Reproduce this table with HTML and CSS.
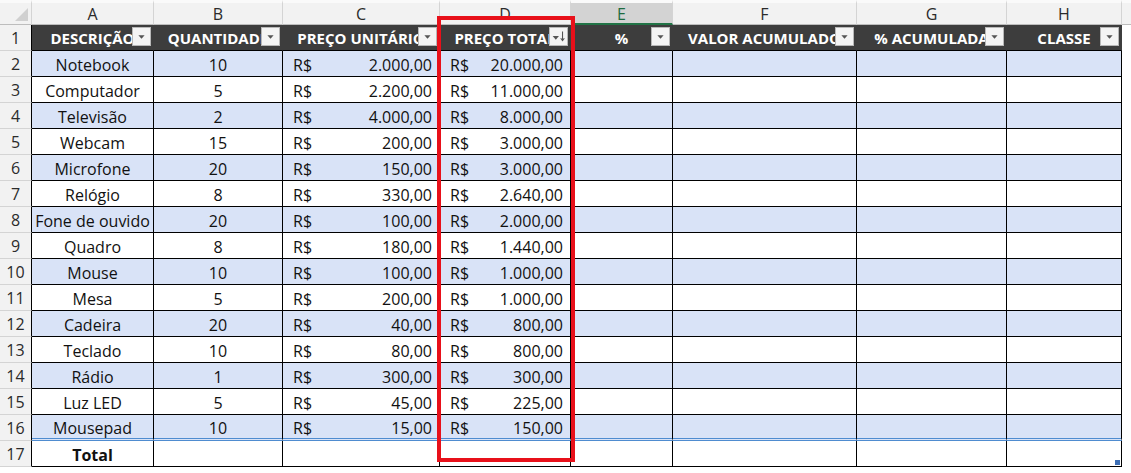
FILE: index.html
```html
<!DOCTYPE html>
<html lang="pt">
<head>
<meta charset="utf-8">
<title>Planilha</title>
<link rel="stylesheet" href="styles.css">
</head>
<body>
<div class="sheet">
  <div class="corner"><span class="corner-tri"></span></div>
  <div class="colhead">A</div>
  <div class="colhead">B</div>
  <div class="colhead">C</div>
  <div class="colhead">D</div>
  <div class="colhead sel">E</div>
  <div class="colhead">F</div>
  <div class="colhead">G</div>
  <div class="colhead">H</div>
  <div class="colhead filler"></div>

  <div class="rownum">1</div>
  <div class="th"><span>DESCRIÇÃO</span><i class="fbtn"><svg viewBox="0 0 19 19"><path d="M6 8h7l-3.5 4z"/></svg></i></div>
  <div class="th"><span>QUANTIDADE</span><i class="fbtn"><svg viewBox="0 0 19 19"><path d="M6 8h7l-3.5 4z"/></svg></i></div>
  <div class="th"><span>PREÇO UNITÁRIO</span><i class="fbtn"><svg viewBox="0 0 19 19"><path d="M6 8h7l-3.5 4z"/></svg></i></div>
  <div class="th"><span>PREÇO TOTAL</span><i class="fbtn"><svg viewBox="0 0 19 19"><path d="M3 9h7l-3.5 4z"/><path d="M14 4v10M12 11.5l2 2.5 2-2.5" fill="none" stroke="#555" stroke-width="1.2"/></svg></i></div>
  <div class="th"><span>%</span><i class="fbtn"><svg viewBox="0 0 19 19"><path d="M6 8h7l-3.5 4z"/></svg></i></div>
  <div class="th"><span>VALOR ACUMULADO</span><i class="fbtn"><svg viewBox="0 0 19 19"><path d="M6 8h7l-3.5 4z"/></svg></i></div>
  <div class="th"><span>% ACUMULADA</span><i class="fbtn"><svg viewBox="0 0 19 19"><path d="M6 8h7l-3.5 4z"/></svg></i></div>
  <div class="th"><span>CLASSE</span><i class="fbtn"><svg viewBox="0 0 19 19"><path d="M6 8h7l-3.5 4z"/></svg></i></div>
  <div class="blank"></div>

  <div class="rownum">2</div><div class="c ctr band">Notebook</div><div class="c ctr band">10</div><div class="c acc band"><span>R$</span><span>2.000,00</span></div><div class="c acc band"><span>R$</span><span>20.000,00</span></div><div class="c band"></div><div class="c band"></div><div class="c band"></div><div class="c band"></div><div class="blank"></div>
  <div class="rownum">3</div><div class="c ctr">Computador</div><div class="c ctr">5</div><div class="c acc"><span>R$</span><span>2.200,00</span></div><div class="c acc"><span>R$</span><span>11.000,00</span></div><div class="c"></div><div class="c"></div><div class="c"></div><div class="c"></div><div class="blank"></div>
  <div class="rownum">4</div><div class="c ctr band">Televisão</div><div class="c ctr band">2</div><div class="c acc band"><span>R$</span><span>4.000,00</span></div><div class="c acc band"><span>R$</span><span>8.000,00</span></div><div class="c band"></div><div class="c band"></div><div class="c band"></div><div class="c band"></div><div class="blank"></div>
  <div class="rownum">5</div><div class="c ctr">Webcam</div><div class="c ctr">15</div><div class="c acc"><span>R$</span><span>200,00</span></div><div class="c acc"><span>R$</span><span>3.000,00</span></div><div class="c"></div><div class="c"></div><div class="c"></div><div class="c"></div><div class="blank"></div>
  <div class="rownum">6</div><div class="c ctr band">Microfone</div><div class="c ctr band">20</div><div class="c acc band"><span>R$</span><span>150,00</span></div><div class="c acc band"><span>R$</span><span>3.000,00</span></div><div class="c band"></div><div class="c band"></div><div class="c band"></div><div class="c band"></div><div class="blank"></div>
  <div class="rownum">7</div><div class="c ctr">Relógio</div><div class="c ctr">8</div><div class="c acc"><span>R$</span><span>330,00</span></div><div class="c acc"><span>R$</span><span>2.640,00</span></div><div class="c"></div><div class="c"></div><div class="c"></div><div class="c"></div><div class="blank"></div>
  <div class="rownum">8</div><div class="c ctr band">Fone de ouvido</div><div class="c ctr band">20</div><div class="c acc band"><span>R$</span><span>100,00</span></div><div class="c acc band"><span>R$</span><span>2.000,00</span></div><div class="c band"></div><div class="c band"></div><div class="c band"></div><div class="c band"></div><div class="blank"></div>
  <div class="rownum">9</div><div class="c ctr">Quadro</div><div class="c ctr">8</div><div class="c acc"><span>R$</span><span>180,00</span></div><div class="c acc"><span>R$</span><span>1.440,00</span></div><div class="c"></div><div class="c"></div><div class="c"></div><div class="c"></div><div class="blank"></div>
  <div class="rownum">10</div><div class="c ctr band">Mouse</div><div class="c ctr band">10</div><div class="c acc band"><span>R$</span><span>100,00</span></div><div class="c acc band"><span>R$</span><span>1.000,00</span></div><div class="c band"></div><div class="c band"></div><div class="c band"></div><div class="c band"></div><div class="blank"></div>
  <div class="rownum">11</div><div class="c ctr">Mesa</div><div class="c ctr">5</div><div class="c acc"><span>R$</span><span>200,00</span></div><div class="c acc"><span>R$</span><span>1.000,00</span></div><div class="c"></div><div class="c"></div><div class="c"></div><div class="c"></div><div class="blank"></div>
  <div class="rownum">12</div><div class="c ctr band">Cadeira</div><div class="c ctr band">20</div><div class="c acc band"><span>R$</span><span>40,00</span></div><div class="c acc band"><span>R$</span><span>800,00</span></div><div class="c band"></div><div class="c band"></div><div class="c band"></div><div class="c band"></div><div class="blank"></div>
  <div class="rownum">13</div><div class="c ctr">Teclado</div><div class="c ctr">10</div><div class="c acc"><span>R$</span><span>80,00</span></div><div class="c acc"><span>R$</span><span>800,00</span></div><div class="c"></div><div class="c"></div><div class="c"></div><div class="c"></div><div class="blank"></div>
  <div class="rownum">14</div><div class="c ctr band">Rádio</div><div class="c ctr band">1</div><div class="c acc band"><span>R$</span><span>300,00</span></div><div class="c acc band"><span>R$</span><span>300,00</span></div><div class="c band"></div><div class="c band"></div><div class="c band"></div><div class="c band"></div><div class="blank"></div>
  <div class="rownum">15</div><div class="c ctr">Luz LED</div><div class="c ctr">5</div><div class="c acc"><span>R$</span><span>45,00</span></div><div class="c acc"><span>R$</span><span>225,00</span></div><div class="c"></div><div class="c"></div><div class="c"></div><div class="c"></div><div class="blank"></div>
  <div class="rownum">16</div><div class="c ctr band last">Mousepad</div><div class="c ctr band last">10</div><div class="c acc band last"><span>R$</span><span>15,00</span></div><div class="c acc band last"><span>R$</span><span>150,00</span></div><div class="c band last"></div><div class="c band last"></div><div class="c band last"></div><div class="c band last"></div><div class="blank"></div>
  <div class="rownum">17</div><div class="c ctr bold">Total</div><div class="c"></div><div class="c"></div><div class="c"></div><div class="c"></div><div class="c"></div><div class="c"></div><div class="c handle-cell"><span class="handle"></span></div><div class="blank"></div>

  <div class="highlight"></div>
</div>
</body>
</html>
```

FILE: styles.css
```css
html, body {
  margin: 0;
  padding: 0;
  background: #ffffff;
}
body {
  font-family: "Open Sans", "Liberation Sans", sans-serif;
  width: 1131px;
  height: 473px;
  overflow: hidden;
}
.sheet {
  position: relative;
  display: grid;
  grid-template-columns: 32px 122px 129px 157px 131px 102px 184px 150px 115px 9px;
  grid-template-rows: 25px repeat(17, 26px);
}
.corner {
  background: #f2f2f2;
  border-right: 1px solid #d4d4d4;
  border-bottom: 1px solid #bdbdbd;
  box-sizing: border-box;
  position: relative;
  border-top: 3px solid #fafafa;
}
.corner-tri {
  position: absolute;
  right: 3px;
  bottom: 3px;
  width: 0;
  height: 0;
  border-left: 13px solid transparent;
  border-bottom: 13px solid #d0d0d0;
}
.colhead {
  box-sizing: border-box;
  background: #f2f2f2;
  border-top: 3px solid #fafafa;
  border-right: 1px solid #d4d4d4;
  border-bottom: 1px solid #bdbdbd;
  display: flex;
  align-items: center;
  justify-content: center;
  font-size: 16px;
  color: #2b2b2b;
  padding-top: 1px;
}
.colhead.sel {
  background: #d3d3d3;
  color: #1e6b3f;
  border-bottom: 2px solid #217346;
}
.colhead.filler {
  border-right: none;
}
.rownum {
  box-sizing: border-box;
  background: #f2f2f2;
  border-right: 1px solid #000;
  border-bottom: 1px solid #d4d4d4;
  display: flex;
  align-items: center;
  justify-content: center;
  font-size: 16px;
  color: #2b2b2b;
}
.th {
  position: relative;
  box-sizing: border-box;
  background: #3d3d3d;
  border-right: 1px solid #3d3d3d;
  border-bottom: 1px solid #000;
  display: flex;
  align-items: center;
  justify-content: center;
  color: #ffffff;
  font-weight: 700;
  font-size: 15px;
  white-space: nowrap;
  overflow: hidden;
}
.th span {
  margin-top: 1px;
}
.fbtn {
  position: absolute;
  right: 2px;
  top: 2px;
  width: 19px;
  height: 19px;
  box-sizing: border-box;
  background: #f4f4f4;
  border: 1px solid #b8b8b8;
  display: block;
}
.fbtn svg {
  display: block;
  width: 17px;
  height: 17px;
  fill: #555;
}
.c {
  box-sizing: border-box;
  border-right: 1px solid #000;
  border-bottom: 1px solid #000;
  background: #ffffff;
  display: flex;
  align-items: center;
  font-size: 16px;
  color: #111;
  white-space: nowrap;
  padding-top: 2px;
}
.c.band {
  background: #d9e3f7;
}
.c.last {
  border-bottom: 3px double #4f8cd0;
}
.c.ctr {
  justify-content: center;
}
.c.acc {
  justify-content: space-between;
  padding-left: 10px;
  padding-right: 7px;
}
.c.bold {
  font-weight: 700;
}
.blank {
  background: #ffffff;
}
.handle-cell {
  position: relative;
}
.handle {
  position: absolute;
  right: 1px;
  bottom: 1px;
  width: 5px;
  height: 5px;
  background: #3e6fb5;
}
.highlight {
  position: absolute;
  left: 437px;
  top: 16px;
  width: 138px;
  height: 446px;
  box-sizing: border-box;
  border: 4px solid #e8101a;
  pointer-events: none;
}
```
